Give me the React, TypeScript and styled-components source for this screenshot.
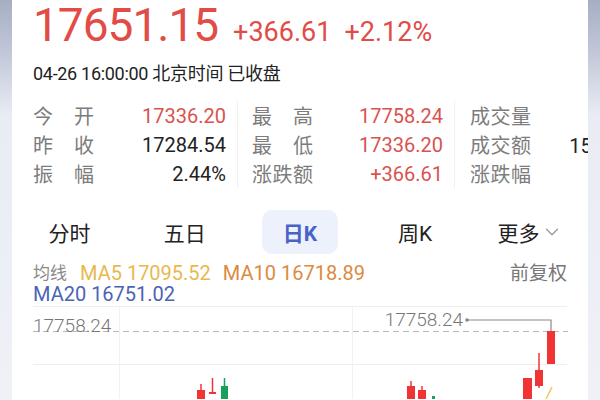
import React from 'react';
import styled, { createGlobalStyle } from 'styled-components';
import { ChevronDown } from 'lucide-react';

const FONT = `Roboto, "Noto Sans CJK SC", "Noto Sans", sans-serif`;
const RED = '#e24c46';
const DARK = '#222222';
const GREY = '#7c7c7c';

const GlobalStyle = createGlobalStyle`
  html, body {
    margin: 0;
    padding: 0;
    background: #eef0f6;
  }
  body {
    font-family: ${FONT};
  }
`;

const Page = styled.div`
  width: 600px;
  height: 400px;
  box-sizing: border-box;
  padding: 0 12px;
  overflow: hidden;
  background: linear-gradient(180deg, #a6aec3 0%, #c3c9d9 55px, #e9ecf3 115px, #eff1f7 100%);
`;

const Card = styled.div`
  width: 576px;
  height: 400px;
  background: #ffffff;
  overflow: hidden;
  display: flex;
  flex-direction: column;
`;

const PriceRow = styled.div`
  display: flex;
  align-items: baseline;
  padding-left: 21px;
  height: 50px;
  color: ${RED};
`;

const BigPrice = styled.span`
  font-size: 46px;
  line-height: 50px;
  letter-spacing: -1px;
  margin-right: 15px;
`;

const Change = styled.span`
  font-size: 27px;
  line-height: 50px;
  margin-right: 13px;
`;

const DateLine = styled.div`
  margin-top: 12px;
  padding-left: 21px;
  font-size: 18px;
  line-height: 24px;
  letter-spacing: -0.3px;
  color: ${DARK};
  white-space: nowrap;
`;

const StatsGrid = styled.div`
  margin-top: 15px;
  display: flex;
  padding-left: 21px;
`;

const StatColumn = styled.div<{ $width: number; $divider?: boolean; $pad: number }>`
  flex: none;
  width: ${(p) => p.$width}px;
  padding-left: ${(p) => p.$pad}px;
  padding-right: 11px;
  box-sizing: border-box;
  border-right: ${(p) => (p.$divider ? '1px solid #f1f1f1' : 'none')};
`;

const StatRow = styled.div`
  display: flex;
  align-items: center;
  height: 29px;
  font-size: 20px;
  white-space: nowrap;
`;

const StatLabel = styled.span`
  flex: none;
  width: 61px;
  display: flex;
  justify-content: space-between;
  color: ${GREY};
`;

const StatValue = styled.span<{ $up?: boolean }>`
  flex: 1;
  text-align: right;
  color: ${(p) => (p.$up ? '#d9534f' : DARK)};
`;

const Tabs = styled.div`
  margin-top: 22px;
  display: grid;
  grid-template-columns: repeat(5, 1fr);
  height: 44px;
`;

const Tab = styled.div<{ $active?: boolean }>`
  display: flex;
  align-items: center;
  justify-content: center;
  font-size: 21px;
  color: ${(p) => (p.$active ? '#4a62c8' : DARK)};
  font-weight: ${(p) => (p.$active ? 700 : 400)};
`;

const Pill = styled.span`
  display: flex;
  align-items: center;
  justify-content: center;
  width: 76px;
  height: 44px;
  border-radius: 10px;
  background: #edf1fc;
`;

const MoreIcon = styled(ChevronDown)`
  margin-left: 2px;
  color: #9a9a9a;
`;

const MaRow = styled.div<{ $first?: boolean }>`
  margin-top: ${(p) => (p.$first ? 9 : 0)}px;
  display: flex;
  align-items: center;
  padding: 0 21px;
  font-size: 20px;
  line-height: 21px;
  white-space: nowrap;
`;

const MaItem = styled.span<{ $color: string; $gap?: number; $size?: number }>`
  color: ${(p) => p.$color};
  margin-right: ${(p) => p.$gap ?? 12}px;
  font-size: ${(p) => p.$size ?? 20}px;
`;

const Spacer = styled.span`
  flex: 1;
`;

const Chart = styled.svg`
  display: block;
  margin-top: 1px;
  flex: none;
`;

type Candle = { x: number; w: number; top: number; bottom: number; wt?: number; wb?: number; up: boolean };

const candles: Candle[] = [
  { x: 185, w: 8, top: 84, bottom: 94, wt: 78, up: true },
  { x: 197, w: 7, top: 86, bottom: 88, wt: 72, wb: 88, up: true },
  { x: 209, w: 7, top: 80, bottom: 94, wt: 72, up: false },
  { x: 395, w: 8, top: 80, bottom: 94, wt: 75, up: true },
  { x: 406, w: 8, top: 84, bottom: 94, wt: 80, up: true },
  { x: 420, w: 3, top: 90, bottom: 94, up: false },
  { x: 511, w: 9, top: 72, bottom: 94, up: true },
  { x: 523, w: 8, top: 64, bottom: 80, wt: 47, wb: 82, up: true },
  { x: 535, w: 8, top: 25, bottom: 58, up: true },
];

const KChart = () => (
  <Chart width={576} height={93} viewBox="0 0 576 93">
    <line x1={21} y1={0.5} x2={555} y2={0.5} stroke="#efefef" />
    <line x1={21} y1={58.5} x2={555} y2={58.5} stroke="#efefef" />
    <line x1={107.5} y1={0} x2={107.5} y2={93} stroke="#f2f2f2" />
    <line x1={340.5} y1={0} x2={340.5} y2={93} stroke="#f2f2f2" />
    <line x1={21} y1={25.5} x2={556} y2={25.5} stroke="#b9b9b9" strokeWidth={1.2} strokeDasharray="6 4" />
    <text x={21} y={26} fontSize={19} fontWeight={300} fill="#777" fontFamily="Roboto, sans-serif">
      17758.24
    </text>
    <text x={451} y={20} textAnchor="end" fontSize={19} fontWeight={300} fill="#777" fontFamily="Roboto, sans-serif">
      17758.24
    </text>
    <circle cx={455} cy={14} r={1.8} fill="#888" />
    <polyline points="455,14 539,14 539,25" fill="none" stroke="#8a8a8a" strokeWidth={1.2} />
    <line x1={540} y1={81} x2={534} y2={93} stroke="#f0c75e" strokeWidth={1.5} />
    {candles.map((c, i) => {
      const color = c.up ? '#f03434' : '#17a05b';
      const cx = c.x + c.w / 2;
      return (
        <g key={i}>
          {c.wt !== undefined && (
            <line x1={cx} y1={c.wt} x2={cx} y2={c.wb ?? c.bottom} stroke={color} strokeWidth={1.5} />
          )}
          <rect x={c.x} y={c.top} width={c.w} height={c.bottom - c.top} fill={color} />
        </g>
      );
    })}
  </Chart>
);

const Label = ({ text }: { text: string }) => (
  <StatLabel>
    {text.split('').map((ch, i) => (
      <span key={i}>{ch}</span>
    ))}
  </StatLabel>
);

const columns = [
  {
    width: 205,
    pad: 0,
    divider: true,
    rows: [
      ['今开', '17336.20', true],
      ['昨收', '17284.54', false],
      ['振幅', '2.44%', false],
    ],
  },
  {
    width: 217,
    pad: 14,
    divider: true,
    rows: [
      ['最高', '17758.24', true],
      ['最低', '17336.20', true],
      ['涨跌额', '+366.61', true],
    ],
  },
  {
    width: 218,
    pad: 15,
    divider: false,
    rows: [
      ['成交量', '8.92亿', false],
      ['成交额', '1538.55亿', false],
      ['涨跌幅', '+2.12%', true],
    ],
  },
] as const;

export default function App() {
  return (
    <>
      <GlobalStyle />
      <Page>
        <Card>
          <PriceRow>
            <BigPrice>17651.15</BigPrice>
            <Change>+366.61</Change>
            <Change>+2.12%</Change>
          </PriceRow>
          <DateLine>04-26 16:00:00 北京时间 已收盘</DateLine>

          <StatsGrid>
            {columns.map((col, ci) => (
              <StatColumn key={ci} $width={col.width} $pad={col.pad} $divider={col.divider}>
                {col.rows.map(([label, value, up]) => (
                  <StatRow key={label}>
                    <Label text={label} />
                    <StatValue $up={up}>{value}</StatValue>
                  </StatRow>
                ))}
              </StatColumn>
            ))}
          </StatsGrid>

          <Tabs>
            <Tab>分时</Tab>
            <Tab>五日</Tab>
            <Tab $active>
              <Pill>日K</Pill>
            </Tab>
            <Tab>周K</Tab>
            <Tab>
              更多
              <MoreIcon size={22} strokeWidth={1.4} />
            </Tab>
          </Tabs>

          <MaRow $first>
            <MaItem $color="#8a8a8a" $gap={13} $size={17}>均线</MaItem>
            <MaItem $color="#e9b84e">MA5 17095.52</MaItem>
            <MaItem $color="#dc8a3f">MA10 16718.89</MaItem>
            <Spacer />
            <MaItem $color="#777" $gap={0} $size={19}>前复权</MaItem>
          </MaRow>
          <MaRow>
            <MaItem $color="#4b63b6">MA20 16751.02</MaItem>
          </MaRow>

          <KChart />
        </Card>
      </Page>
    </>
  );
}
